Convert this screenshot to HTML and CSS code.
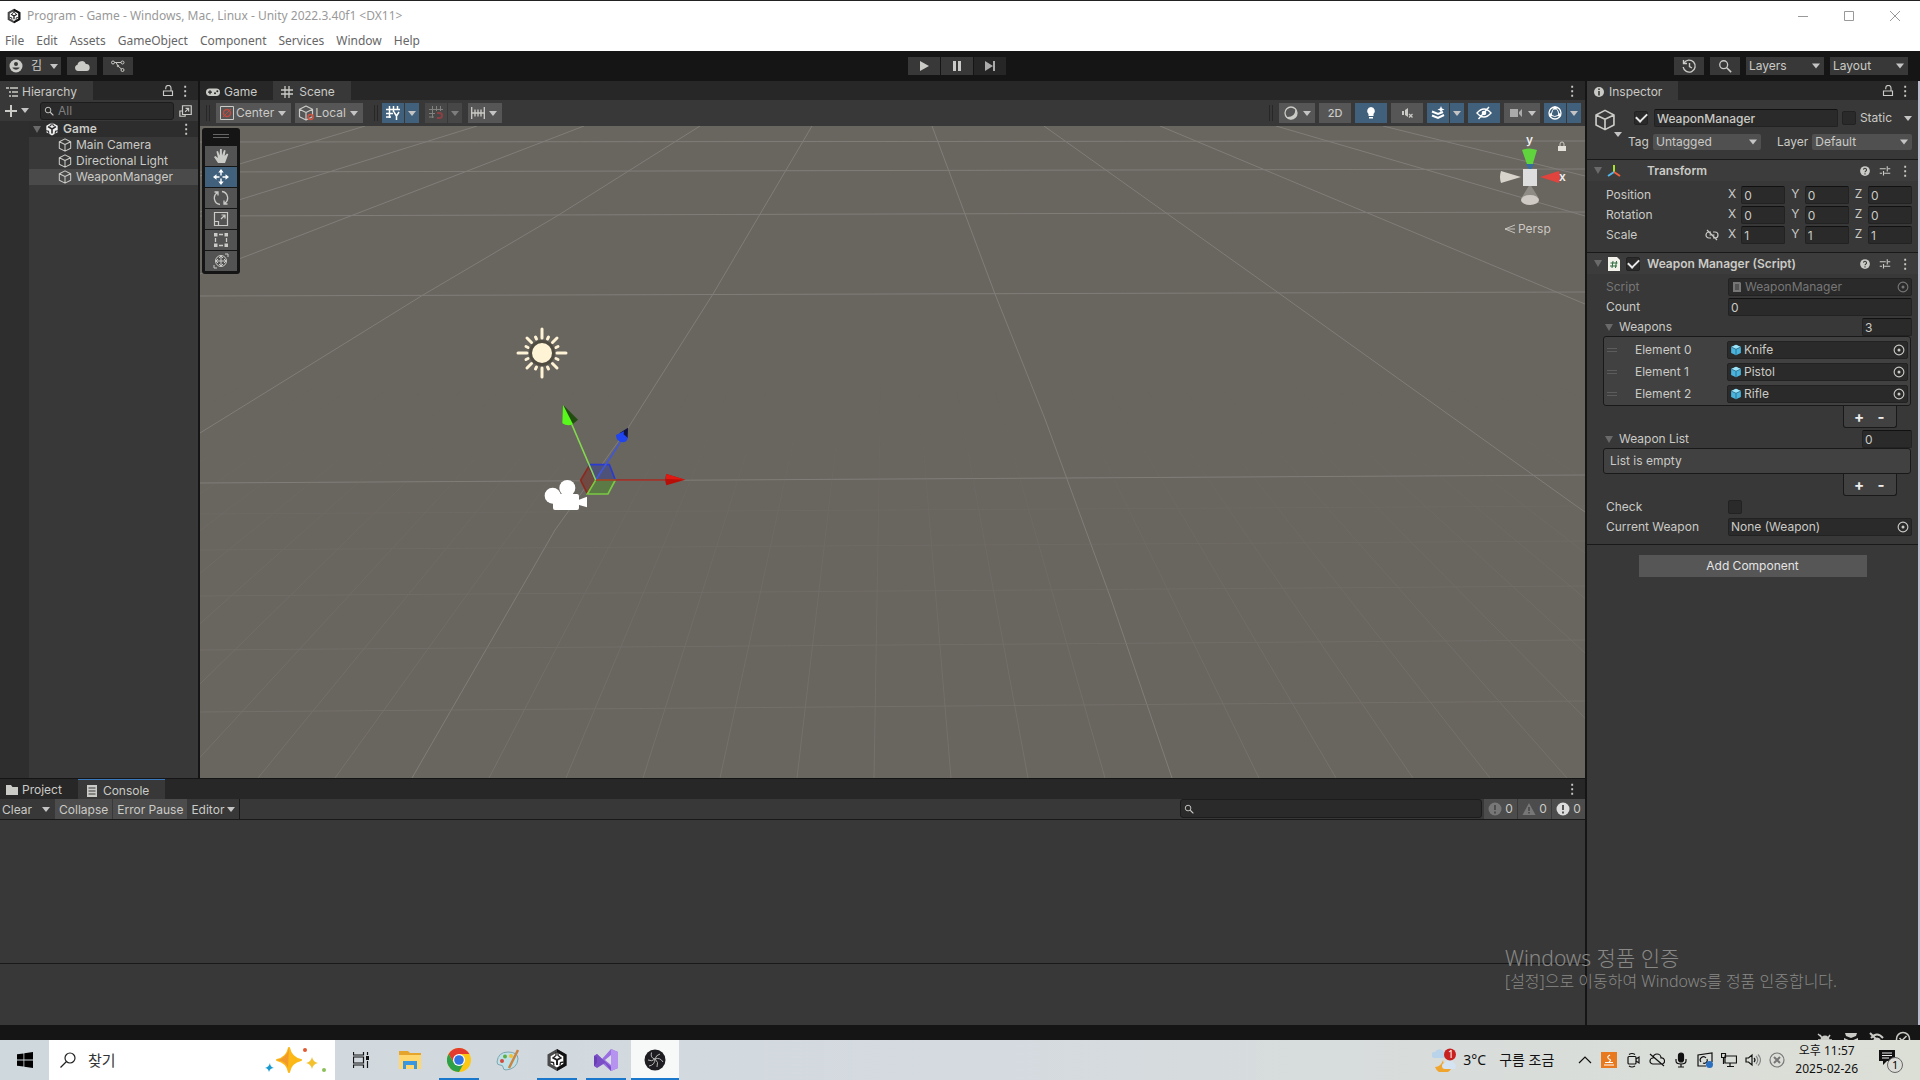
FILE: index.html
```html
<!DOCTYPE html>
<html lang="ko">

<head>
    <meta charset="UTF-8">
    <meta name="viewport" content="width=device-width, initial-scale=1">
    <title>Program - Game - Unity</title>
    <link rel="stylesheet" href="styles.css">
</head>

<body>

    <!-- ICONS -->
    <svg class="sprite" aria-hidden="true">
        <symbol id="i-cube" viewBox="0 0 16 16"><path d="M8 1 14.500 4.300V11.700L8 15 1.500 11.700V4.300ZM1.500 4.300 8 7.500 14.500 4.300M8 7.500V15" fill="none" stroke="currentColor" stroke-width="1.200" stroke-linejoin="round"/></symbol>
        <symbol id="i-dots" viewBox="0 0 16 16"><path d="M7 1h2.500v2.500H7zM7 7h2.500v2.500H7zM7 13h2.500v2.500H7z" fill="currentColor"/></symbol>
        <symbol id="i-lock" viewBox="0 0 16 16"><path d="M5 5.500V4a3.500 3.500 0 0 1 7 0v4M2 8h12v6H2z" fill="none" stroke="currentColor" stroke-width="1.500"/></symbol>
        <symbol id="i-search" viewBox="0 0 16 16"><circle cx="6.500" cy="6.500" r="4.500" fill="none" stroke="currentColor" stroke-width="1.500"/><path d="M10 10l5 5" stroke="currentColor" stroke-width="1.800"/></symbol>
        <symbol id="i-popout" viewBox="0 0 16 16"><path d="M4 2h10v10H4zM4 8H1v6h6v-2M7 9l4-4M7.500 5H11v3.500" fill="none" stroke="currentColor" stroke-width="1.400"/></symbol>
        <symbol id="i-help" viewBox="0 0 16 16"><circle cx="8" cy="8" r="6.500" fill="currentColor"/><path d="M6 6.200a2 2 0 1 1 2.800 2Q8 8.600 8 9.800M8 11v1.500" fill="none" stroke="#383838" stroke-width="1.500"/></symbol>
        <symbol id="i-preset" viewBox="0 0 16 16"><path d="M1 5h8M12 5h3M11 1.500v7M1 11h3M7 11h8M6 8v6" fill="none" stroke="currentColor" stroke-width="1.500"/></symbol>
        <symbol id="i-target" viewBox="0 0 16 16"><circle cx="8" cy="8" r="6.500" fill="none" stroke="currentColor" stroke-width="1.500"/><circle cx="8" cy="8" r="2" fill="currentColor"/></symbol>
        <symbol id="i-prefab" viewBox="0 0 16 16"><path d="M8 1 14.500 4v8L8 15 1.500 12V4z" fill="#4bb4dc"/><path d="M8 1 14.500 4 8 7 1.500 4z" fill="#9ee4f8"/><path d="M8 7v8M1.500 4 8 7l6.500-3" stroke="#206080" fill="none"/></symbol>
        <symbol id="i-unity" viewBox="0 0 16 16"><path d="M8 .5 14.500 4.200v7.600L8 15.500 1.500 11.800V4.200z" fill="#f0f0f0"/><path d="M8 8V13M8 8 3.500 5.300M8 8l4.500-2.700" fill="none" stroke="#2b2b2b" stroke-width="1.800"/><path d="M7 0v3.500L5 5M9 0v3.500L11 5M1 10l3 .5.500 3M15 10l-3 .5-.5 3" fill="none" stroke="#2b2b2b" stroke-width="1.200"/></symbol>
        <symbol id="i-unityapp" viewBox="0 0 24 24"><path d="M12 1 21.500 6.500v11L12 23 2.500 17.500v-11z" fill="#4a4a4a"/><path d="M12 1 21.500 6.500v11L12 23z" fill="#111"/><path d="M12 4.500 18.300 8.200v7.500L12 19.500 5.700 15.700V8.200z" fill="#fff"/><path d="M12 12v5M12 12 7.500 9.400M12 12l4.500-2.600" fill="none" stroke="#222" stroke-width="2"/><path d="M11 4v3.500L9 9M13 4v3.500L15 9M5.500 14l3 .5.500 3M18.500 14l-3 .5-.5 3" fill="none" stroke="#222" stroke-width="1.300"/></symbol>
    </svg>

    <header class="titlebar">
        <div class="caption">
            <svg class="icon-16"><use href="#i-unityapp"/></svg>
            <span class="caption-text">Program - Game - Windows, Mac, Linux - Unity 2022.3.40f1 &lt;DX11&gt;</span>
            <div class="win-buttons">
                <button aria-label="Minimize"><svg viewBox="0 0 12 12"><path d="M1 6.500h10"/></svg></button>
                <button aria-label="Maximize"><svg viewBox="0 0 12 12"><path d="M1.500 1.500h9v9h-9z"/></svg></button>
                <button aria-label="Close"><svg viewBox="0 0 12 12"><path d="M1 1l10 10M11 1 1 11"/></svg></button>
            </div>
        </div>
        <nav class="menu">
            <a href="#">File</a>
            <a href="#">Edit</a>
            <a href="#">Assets</a>
            <a href="#">GameObject</a>
            <a href="#">Component</a>
            <a href="#">Services</a>
            <a href="#">Window</a>
            <a href="#">Help</a>
        </nav>
    </header>

    <div class="app-toolbar">
        <div class="app-side">
            <button class="app-btn account">
                <svg class="icon-14" viewBox="0 0 14 14"><circle cx="7" cy="7" r="6.500" fill="currentColor"/><circle cx="7" cy="5" r="2" fill="#383838"/><path d="M3.500 9q3.500 3.500 7 0v-.5h-7z" fill="#383838"/></svg>
                김
                <i class="arrow"></i>
            </button>
            <button class="app-btn" aria-label="Cloud"><svg class="icon-16" viewBox="0 0 16 16"><path d="M4 13a3.200 3.200 0 0 1-.5-6.300A4.300 4.300 0 0 1 11.800 6 3.500 3.500 0 0 1 12.500 13z" fill="currentColor"/></svg></button>
            <button class="app-btn" aria-label="Version control"><svg class="icon-16" viewBox="0 0 16 16"><path d="M3.500 4.500h8M6 4.500l2 3.500 4 3.500" fill="none" stroke="currentColor"/><g fill="#383838" stroke="currentColor"><circle cx="3" cy="4.500" r="1.500"/><circle cx="12.500" cy="4.500" r="1.500"/><circle cx="12.500" cy="12" r="1.500"/><circle cx="8" cy="8" r=".8"/></g></svg></button>
        </div>
        <div class="play-controls">
            <button class="app-btn" aria-label="Play"><svg class="icon-14" viewBox="0 0 14 14"><path d="M3 2l9 5-9 5z" fill="currentColor"/></svg></button>
            <button class="app-btn" aria-label="Pause"><svg class="icon-14" viewBox="0 0 14 14"><path d="M3 2h3v10H3zM8 2h3v10H8z" fill="currentColor"/></svg></button>
            <button class="app-btn disabled" aria-label="Step"><svg class="icon-14" viewBox="0 0 14 14"><path d="M2 2l8 5-8 5zM10 2h2v10h-2z" fill="currentColor"/></svg></button>
        </div>
        <div class="app-side app-right">
            <button class="app-btn" aria-label="Undo history"><svg class="icon-16" viewBox="0 0 16 16"><path d="M3 5a6 6 0 1 1-.8 4M2.500 2v3.500H6M8.500 5v3.500l2.500 1.500" fill="none" stroke="currentColor" stroke-width="1.400"/></svg></button>
            <button class="app-btn" aria-label="Search"><svg class="icon-14"><use href="#i-search"/></svg></button>
            <span class="select app-select"><select aria-label="Layers"><option>Layers</option></select></span>
            <span class="select app-select"><select aria-label="Layout"><option>Layout</option></select></span>
        </div>
    </div>

    <main class="workspace">
        <div class="left-area">
            <div class="upper">

                <!-- HIERARCHY -->
                <section class="panel hierarchy">
                    <div class="tabs">
                        <div class="tab active">
                            <svg class="icon-12" viewBox="0 0 12 12"><path d="M0 2h3M4 2h8M3 6h2M6 6h6M3 10h2M6 10h6" stroke="currentColor" stroke-width="1.300"/></svg>
                            Hierarchy
                        </div>
                        <div class="tab-tools">
                            <svg class="icon-12"><use href="#i-lock"/></svg>
                            <svg class="icon-12"><use href="#i-dots"/></svg>
                        </div>
                    </div>
                    <div class="hier-toolbar">
                        <button class="plain" aria-label="Create"><svg class="icon-12" viewBox="0 0 12 12"><path d="M6 0v12M0 6h12" stroke="currentColor" stroke-width="2"/></svg><i class="arrow"></i></button>
                        <label class="search-box"><svg class="icon-10"><use href="#i-search"/></svg><input type="text" placeholder="All" aria-label="Search hierarchy"></label>
                        <button class="plain" aria-label="Open search"><svg class="icon-14"><use href="#i-popout"/></svg></button>
                    </div>
                    <ul class="tree">
                        <li class="scene-row"><i class="fold"></i><svg class="icon-14"><use href="#i-unity"/></svg>Game<svg class="icon-12 push"><use href="#i-dots"/></svg></li>
                        <li><svg class="icon-14"><use href="#i-cube"/></svg>Main Camera</li>
                        <li><svg class="icon-14"><use href="#i-cube"/></svg>Directional Light</li>
                        <li class="selected"><svg class="icon-14"><use href="#i-cube"/></svg>WeaponManager</li>
                    </ul>
                </section>

                <!-- SCENE -->
                <section class="panel scene">
                    <div class="tabs">
                        <div class="tab">
                            <svg class="icon-14" viewBox="0 0 14 14"><rect y="3.500" width="14" height="7.500" rx="3.700" fill="currentColor"/><path d="M2 7.200h4M4 5.200v4" stroke="#282828" stroke-width="1.300"/><circle cx="9" cy="8.300" r="1" fill="#282828"/><circle cx="11.300" cy="6.200" r="1" fill="#282828"/></svg>
                            Game
                        </div>
                        <div class="tab active wide">
                            <svg class="icon-12" viewBox="0 0 12 12"><path d="M4 0v12M8 0v12M0 4h12M0 8h12" stroke="currentColor" stroke-width="1.300"/></svg>
                            Scene
                        </div>
                        <div class="tab-tools"><svg class="icon-12"><use href="#i-dots"/></svg></div>
                    </div>
                    <div class="scene-toolbar">
                        <i class="grip"></i>
                        <button class="tb named"><svg class="icon-16" viewBox="0 0 16 16"><path d="M1.500 1.500h13v13h-13z" fill="none" stroke="currentColor"/><circle cx="8" cy="8" r="3.500" fill="none" stroke="#c2493d" stroke-width="1.500"/><path d="M4 12 12 4" stroke="#c2493d"/></svg>Center<i class="arrow"></i></button>
                        <button class="tb named"><svg class="icon-16" viewBox="0 0 16 16"><use href="#i-cube"/><circle cx="12.500" cy="12" r="2.500" fill="none" stroke="#d0503f" stroke-width="1.500"/></svg>Local<i class="arrow"></i></button>
                        <i class="grip second"></i>
                        <div class="tb-pair first">
                            <button class="tb on" aria-label="Grid"><svg class="icon-14" viewBox="0 0 14 14"><path d="M3.500 0v12M7.500 0v6M11.500 0v4M0 3.500h14M0 7.500h7M0 11h5M8 6l2.500 4L13 6M10.500 9.500V14" fill="none" stroke="currentColor" stroke-width="1.500"/></svg></button>
                            <button class="tb on" aria-label="Grid options"><i class="arrow"></i></button>
                        </div>
                        <div class="tb-pair dim">
                            <button class="tb" aria-label="Snap"><svg class="icon-14" viewBox="0 0 14 14"><path d="M3.500 0v12M7.500 0v5M11.500 0v5M0 3.500h14M0 7.500h6M0 11h5" fill="none" stroke="currentColor"/><path d="M8 7h2.500a2.500 2.500 0 0 1 0 5H8" fill="none" stroke="#e0484e" stroke-width="2"/></svg></button>
                            <button class="tb" aria-label="Snap options"><i class="arrow"></i></button>
                        </div>
                        <button class="tb" aria-label="Increment snapping"><svg class="icon-14" viewBox="0 0 14 14"><path d="M.7 1v12M13.300 1v12M4 3.500v7M7 3.500v7M10 3.500v7M0 7h14" stroke="currentColor" stroke-width="1.300"/></svg><i class="arrow"></i></button>

                        <div class="tb-right">
                            <i class="grip"></i>
                            <button class="tb view" aria-label="Shading"><svg class="icon-14" viewBox="0 0 14 14"><circle cx="7" cy="7" r="6" fill="none" stroke="currentColor" stroke-width="1.300"/><path d="M11.500 3a6 6 0 1 1-9.500 8q9 1 9.500-8z" fill="currentColor"/></svg><i class="arrow"></i></button>
                            <button class="tb sq">2D</button>
                            <button class="tb sq on" aria-label="Lighting"><svg class="icon-14" viewBox="0 0 14 14"><path d="M7 1a4 4 0 0 1 2.500 7v2h-5V8A4 4 0 0 1 7 1zM5 11h4v1.500H5z" fill="currentColor"/></svg></button>
                            <button class="tb sq" aria-label="Audio"><svg class="icon-14" viewBox="0 0 14 14"><path d="M2 5h2v4H2zM5 4l3-2v9L5 9z" fill="currentColor"/><path d="M9 8l3.500 3.500M12.500 8 9 11.500" stroke="currentColor" stroke-width="1.300"/></svg></button>
                            <div class="tb-pair">
                                <button class="tb on" aria-label="Effects"><svg class="icon-14" viewBox="0 0 14 14"><path d="M10 0l1 2.500L13.500 3.500 11 4.500 10 7 9 4.500 6.500 3.500 9 2.500z" fill="currentColor"/><path d="M1 5.500 7 8l5-2M1 9.500 7 12l6-3" fill="none" stroke="currentColor" stroke-width="2"/></svg></button>
                                <button class="tb on" aria-label="Effects options"><i class="arrow"></i></button>
                            </div>
                            <button class="tb sq on" aria-label="Hidden objects"><svg class="icon-16" viewBox="0 0 16 16"><path d="M1 8q7-8 14 0-7 8-14 0zM2.500 14 13 2" fill="none" stroke="currentColor" stroke-width="1.400"/><circle cx="8" cy="8" r="2.300" fill="currentColor"/></svg></button>
                            <button class="tb view dimicon" aria-label="Camera"><svg class="icon-14" viewBox="0 0 14 14"><path d="M1 3h8v8H1zM10 6l3-3v8l-3-3z" fill="currentColor"/></svg><i class="arrow"></i></button>
                            <div class="tb-pair">
                                <button class="tb on" aria-label="Gizmos"><svg class="icon-14" viewBox="0 0 14 14"><circle cx="7" cy="7" r="6" fill="none" stroke="currentColor" stroke-width="1.300"/><path d="M7 1Q4 4 3 9M7 1q4 4 4 8M2.500 9q4 3 9 0" fill="none" stroke="currentColor"/><circle cx="7" cy="2" r="1.700" fill="currentColor"/><circle cx="2.500" cy="9" r="1.700" fill="currentColor"/><circle cx="11.500" cy="9" r="1.700" fill="currentColor"/></svg></button>
                                <button class="tb on" aria-label="Gizmos options"><i class="arrow"></i></button>
                            </div>
                        </div>
                    </div>

                    <div class="viewport">
                        <svg class="world" viewBox="0 0 1385 652" preserveAspectRatio="xMinYMin slice" fill="none">
                            <defs>
                                <linearGradient id="fade" x1="0" y1="0" x2="0" y2="1">
                                    <stop offset=".4" stop-color="#000"/>
                                    <stop offset="1" stop-color="#fff"/>
                                </linearGradient>
                                <mask id="near" maskUnits="userSpaceOnUse" x="0" y="0" width="1385" height="652"><path d="M0 0h1385v652H0z" fill="url(#fade)"/></mask>
                            </defs>
                            <g stroke="#817d79" stroke-width="1">
                                <path d="M0 307 223 169 357 90 500 0M612 0 513 168 428 302 355 404 212 652M732 0 795 168 845 293 911 473 972 652M844 0 1080 168 1375 379 1385 386M960 0 1385 178M1076 0 1385 90M1183 0 1385 50M384 0 0 148M277 0 0 86M165 0 0 50"/>
                                <path d="M0 16 1385 15M0 46 1385 43M0 90 1385 86M0 170 1385 166"/>
                                <path d="M0 357 1385 349"/>
                            </g>
                            <!-- small grid cells, only close to the camera -->
                            <g stroke="#76726d" stroke-width="1" mask="url(#near)">
                                <path d="M687-115-1020 652M687-115-943 652M687-115-866 652M687-115-789 652M687-115-712 652M687-115-635 652M687-115-481 652M687-115-404 652M687-115-327 652M687-115-250 652M687-115-173 652M687-115-96 652M687-115-19 652M687-115 58 652M687-115 135 652M687-115 289 652M687-115 366 652M687-115 443 652M687-115 520 652M687-115 597 652M687-115 674 652M687-115 751 652M687-115 828 652M687-115 905 652M687-115 1059 652M687-115 1136 652M687-115 1213 652M687-115 1290 652M687-115 1367 652M687-115 1444 652M687-115 1521 652M687-115 1598 652M687-115 1675 652M687-115 1829 652M687-115 1906 652M687-115 1983 652M687-115 2060 652M687-115 2137 652M687-115 2214 652M687-115 2291 652"/>
                                <path d="M0 388 1385 380M0 424 1385 415M0 470 1385 460M0 524 1385 514M0 586 1385 575"/>
                            </g>
                            <!-- directional light -->
                            <g transform="translate(342 227)" stroke="#fff3d6" stroke-linecap="round">
                                <circle r="13" fill="#504c42" stroke="none"/>
                                <circle r="10" fill="#fff3d6" stroke="none"/>
                                <path d="M0-15V-24M0 15V24M-15 0H-24M15 0H24M10.500-10.500 15-15M10.500 10.500 15 15M-10.500-10.500-15-15M-10.500 10.500-15 15" stroke-width="3"/>
                                <path d="M5.500-14 6.500-16M14-5.500 16-6.500M14 5.500 16 6.500M5.500 14 6.500 16M-5.500 14-6.500 16M-14 5.500-16 6.500M-14-5.500-16-6.500M-5.500-14-6.500-16" stroke-width="3"/>
                            </g>
                            <!-- move handle and camera -->
                            <g transform="translate(300 174) scale(.3333)" stroke-width="5">
                                <path d="M287 540 262 580 242 541 266 500z" fill="#6f4a42" stroke="#8c281e"/>
                                <path d="M287 540 266 494H328L346 540z" fill="#4f5278" stroke="#2b3bd0"/>
                                <path d="M287 540H346L324 582H262z" fill="#5b7a45" stroke="#7ac943"/>
                                <path d="M287 540 362 425" stroke="#4057d8"/>
                                <path d="M287 540H500" stroke="#a5281e"/>
                                <path d="M287 540 215 372" stroke="#84d850"/>
                                <path d="M189 314 234 359 216 374z" fill="#234d10"/>
                                <path d="M189 314 187 370q14 10 32 3z" fill="#58f81c"/>
                                <path d="M384 383 383 415 358 400z" fill="#101442"/>
                                <path d="M372 394 348 405q0 22 22 22 12-2 13-14l-12-10z" fill="#2044ee"/>
                                <path d="M556 539 499 522q-6 17 0 34z" fill="#b80e08"/>
                                <path d="M556 539 499 522q-2 8-1 15z" fill="#de1a12"/>
                                <g fill="#fff"><circle cx="158" cy="587" r="24"/><circle cx="202" cy="564" r="24"/><rect x="159" y="582" width="78" height="48" rx="6"/><path d="M235 600l26-10v32l-26-8z"/></g>
                            </g>
                        </svg>

                        <div class="tools">
                            <i class="tools-grip"></i>
                            <button class="tool" aria-label="Hand"><svg viewBox="0 0 16 16"><path d="M5 15 1 9l1.400-1L5 10 3.400 3.500l1.600-.4L6.600 7.500 7 1h1.800L9 7.500 11 2l1.600.4-1 5.600L14 5.500l1.300.8L12 15z" fill="currentColor"/></svg></button>
                            <button class="tool on" aria-label="Move"><svg viewBox="0 0 16 16"><path d="M8 0l2.700 3.500H5.300zM8 16l2.700-3.500H5.300zM0 8l3.500-2.700v5.400zM16 8l-3.500-2.700v5.400z" fill="currentColor"/><path d="M8 3v3.500M8 9.500V13M3 8h3.500M9.500 8H13" stroke="currentColor" stroke-width="1.400"/></svg></button>
                            <button class="tool" aria-label="Rotate"><svg viewBox="0 0 16 16"><path d="M7 14.500A6.500 6.500 0 0 1 4.500 2.500M1.500 2h3.500v3.500M9 1.500a6.500 6.500 0 0 1 2.500 12M14.500 14H11v-3.500" fill="none" stroke="currentColor" stroke-width="1.300"/></svg></button>
                            <button class="tool" aria-label="Scale"><svg viewBox="0 0 16 16"><path d="M1.500 1.500h13v13h-13zM1.500 10.500h4v4M8 8l4-4M8.500 4H12v3.500" fill="none" stroke="currentColor" stroke-width="1.200"/></svg></button>
                            <button class="tool" aria-label="Rect"><svg viewBox="0 0 16 16"><path d="M2.500 6v4M13.500 6v4M6 2.500h4M6 13.500h4" stroke="currentColor" stroke-width="1.300"/><path d="M1 1h3.500v3.500H1zM11.500 1H15v3.500h-3.500zM1 11.500h3.500V15H1zM11.500 11.500H15V15h-3.500z" fill="currentColor"/></svg></button>
                            <button class="tool" aria-label="Transform"><svg viewBox="0 0 16 16"><circle cx="8" cy="8" r="5.500" fill="none" stroke="currentColor"/><path d="M8 3v10M3 8h10M6 5l2-2 2 2M6 11l2 2 2-2M5 6 3 8l2 2M11 6l2 2-2 2M12 1h3v3M1 12v3h3" fill="none" stroke="currentColor"/></svg></button>
                        </div>

                        <svg class="axes" viewBox="0 0 74 104">
                            <path d="M25 17q7-3 15 0L34 37h-2z" fill="#5fd43c"/>
                            <path d="M29 31 33 39 37 31z" fill="#3b6b9a"/>
                            <path d="M24 44 4 38q-2 6 0 12z" fill="#d8d4cc"/>
                            <path d="M43 44 62 38q2 6 0 12z" fill="#e0443c"/>
                            <path d="M33 51 41 64H25z" fill="#8f8c86"/>
                            <ellipse cx="33" cy="67" rx="9" ry="5" fill="#cfcbc4"/>
                            <path d="M26 36h14v17H26z" fill="#dedede"/>
                            <path d="M61 13h8v5h-8z" fill="#e4e0da"/>
                            <path d="M63 13v-2a2 2 0 0 1 4 0v2" fill="none" stroke="#cfcbc4"/>
                            <path d="M18 92 8 96 18 100M8 96h10" fill="none" stroke="#c8c5be"/>
                            <text x="29" y="11" class="axis">y</text>
                            <text x="62" y="48" class="axis">x</text>
                            <text x="21" y="100">Persp</text>
                        </svg>
                    </div>
                </section>
            </div>

            <!-- CONSOLE -->
            <section class="panel console">
                <div class="tabs">
                    <div class="tab">
                        <svg class="icon-12" viewBox="0 0 12 12"><path d="M0 1h5l1.500 2H12v8H0z" fill="currentColor"/></svg>
                        Project
                    </div>
                    <div class="tab active focused">
                        <svg class="icon-12" viewBox="0 0 12 12"><path d="M1 0h10v12H1z" fill="currentColor"/><path d="M2.500 3h7M2.500 6h7M2.500 9h7" stroke="#383838"/></svg>
                        Console
                    </div>
                    <div class="tab-tools"><svg class="icon-12"><use href="#i-dots"/></svg></div>
                </div>
                <div class="console-toolbar">
                    <button class="cb clear">Clear<i class="arrow"></i></button>
                    <button class="cb lit">Collapse</button>
                    <button class="cb lit">Error Pause</button>
                    <button class="cb editor">Editor<i class="arrow"></i></button>
                    <label class="search-box console-search"><svg class="icon-10"><use href="#i-search"/></svg><input type="text" aria-label="Search console"></label>
                    <button class="cb lit count off"><svg class="icon-14" viewBox="0 0 14 14"><circle cx="7" cy="7" r="6.500" fill="currentColor"/><path d="M7 3v5M7 9.500v2" stroke="#444" stroke-width="1.600"/></svg>0</button>
                    <button class="cb lit count off"><svg class="icon-14" viewBox="0 0 14 14"><path d="M7 1l6.500 12H.5z" fill="currentColor"/><path d="M7 5v4M7 10v1.500" stroke="#444" stroke-width="1.500"/></svg>0</button>
                    <button class="cb lit count"><svg class="icon-14" viewBox="0 0 14 14"><circle cx="7" cy="7" r="6.500" fill="#ddd"/><path d="M7 3v5M7 9.500v2" stroke="#333" stroke-width="1.600"/></svg>0</button>
                </div>
                <div class="log-list"></div>
                <div class="log-detail"></div>
            </section>
        </div>

        <!-- INSPECTOR -->
        <section class="panel inspector">
            <div class="tabs">
                <div class="tab active">
                    <svg class="icon-12" viewBox="0 0 12 12"><circle cx="6" cy="6" r="5" fill="currentColor"/><path d="M6 2.500V4M6 5v4.500" stroke="#383838" stroke-width="1.600"/></svg>
                    Inspector
                </div>
                <div class="tab-tools">
                    <svg class="icon-12"><use href="#i-lock"/></svg>
                    <svg class="icon-12"><use href="#i-dots"/></svg>
                </div>
            </div>

            <div class="object-head">
                <div class="object-icon"><svg><use href="#i-cube"/></svg><i class="arrow"></i></div>
                <div class="object-fields">
                    <div class="name-row">
                        <input type="checkbox" class="check" checked aria-label="Active">
                        <input type="text" class="field name" value="WeaponManager" aria-label="Name">
                        <input type="checkbox" class="check" id="static">
                        <label for="static">Static</label>
                        <i class="arrow"></i>
                    </div>
                    <div class="tag-row">
                        <label for="tag">Tag</label>
                        <span class="select tag-select"><select id="tag"><option>Untagged</option></select></span>
                        <label for="layer">Layer</label>
                        <span class="select layer-select"><select id="layer"><option>Default</option></select></span>
                    </div>
                </div>
            </div>

            <div class="component">
                <div class="comp-head">
                    <i class="fold"></i>
                    <svg class="icon-14" viewBox="0 0 14 14"><path d="M7 8V1" stroke="#a6e22e" stroke-width="2"/><path d="M7 8 1 12" stroke="#4fb8f0" stroke-width="2"/><path d="M7 8l6 4" stroke="#f0623c" stroke-width="2"/></svg>
                    <span class="no-check"></span>
                    <h2>Transform</h2>
                    <svg class="icon-12"><use href="#i-help"/></svg>
                    <svg class="icon-12"><use href="#i-preset"/></svg>
                    <svg class="icon-12"><use href="#i-dots"/></svg>
                </div>
                <div class="props">
                    <div class="prop">
                        <span class="prop-name">Position</span>
                        <label class="axis-field">X<input type="text" class="field" value="0"></label>
                        <label class="axis-field">Y<input type="text" class="field" value="0"></label>
                        <label class="axis-field">Z<input type="text" class="field" value="0"></label>
                    </div>
                    <div class="prop">
                        <span class="prop-name">Rotation</span>
                        <label class="axis-field">X<input type="text" class="field" value="0"></label>
                        <label class="axis-field">Y<input type="text" class="field" value="0"></label>
                        <label class="axis-field">Z<input type="text" class="field" value="0"></label>
                    </div>
                    <div class="prop">
                        <span class="prop-name">Scale<svg class="icon-14" viewBox="0 0 14 14"><path d="M6 10H4a3 3 0 0 1 0-6h2M8 4h2a3 3 0 0 1 0 6H8M4.500 7h5M2 2l10 10" fill="none" stroke="currentColor" stroke-width="1.200"/></svg></span>
                        <label class="axis-field">X<input type="text" class="field" value="1"></label>
                        <label class="axis-field">Y<input type="text" class="field" value="1"></label>
                        <label class="axis-field">Z<input type="text" class="field" value="1"></label>
                    </div>
                </div>
            </div>

            <div class="component script">
                <div class="comp-head">
                    <i class="fold"></i>
                    <svg class="icon-14" viewBox="0 0 14 14"><path d="M1 0h9l3 3v11H1z" fill="#f2f2ea"/><path d="M6 4 5 11M9.500 4l-1 7M3.500 6h7M3 9h7" stroke="#2c6b3c"/></svg>
                    <input type="checkbox" class="check" checked aria-label="Enabled">
                    <h2>Weapon Manager (Script)</h2>
                    <svg class="icon-12"><use href="#i-help"/></svg>
                    <svg class="icon-12"><use href="#i-preset"/></svg>
                    <svg class="icon-12"><use href="#i-dots"/></svg>
                </div>
                <div class="props">
                    <div class="prop disabled">
                        <span class="prop-name">Script</span>
                        <button class="object-field" disabled><svg class="icon-12" viewBox="0 0 12 12"><path d="M2 1h7l1 1v9H2z" fill="currentColor"/><path d="M4 4h4M4 6h4M4 8h4" stroke="#333"/></svg>WeaponManager<svg class="icon-12 push"><use href="#i-target"/></svg></button>
                    </div>
                    <div class="prop">
                        <label class="prop-name" for="count">Count</label>
                        <input type="text" class="field" id="count" value="0">
                    </div>
                    <div class="prop list-head">
                        <i class="fold"></i>
                        <label for="weapons">Weapons</label>
                        <input type="text" class="field size" id="weapons" value="3">
                    </div>
                    <div class="list">
                        <div class="element"><i class="handle"></i><span>Element 0</span><button class="object-field"><svg class="icon-12"><use href="#i-prefab"/></svg>Knife<svg class="icon-12 push"><use href="#i-target"/></svg></button></div>
                        <div class="element"><i class="handle"></i><span>Element 1</span><button class="object-field"><svg class="icon-12"><use href="#i-prefab"/></svg>Pistol<svg class="icon-12 push"><use href="#i-target"/></svg></button></div>
                        <div class="element"><i class="handle"></i><span>Element 2</span><button class="object-field"><svg class="icon-12"><use href="#i-prefab"/></svg>Rifle<svg class="icon-12 push"><use href="#i-target"/></svg></button></div>
                    </div>
                    <div class="list-foot"><button>+</button><button>-</button></div>
                    <div class="prop list-head">
                        <i class="fold"></i>
                        <label for="weapon-list">Weapon List</label>
                        <input type="text" class="field size" id="weapon-list" value="0">
                    </div>
                    <div class="list empty">List is empty</div>
                    <div class="list-foot"><button>+</button><button>-</button></div>
                    <div class="prop">
                        <label class="prop-name" for="check">Check</label>
                        <input type="checkbox" class="check" id="check">
                    </div>
                    <div class="prop">
                        <span class="prop-name">Current Weapon</span>
                        <button class="object-field">None (Weapon)<svg class="icon-12 push"><use href="#i-target"/></svg></button>
                    </div>
                </div>
            </div>

            <button class="add-component">Add Component</button>
        </section>
    </main>

    <div class="statusbar">
        <svg viewBox="0 0 16 16"><circle cx="8" cy="9" r="4.500" fill="currentColor"/><path d="M1 3l14 12M3 4l2 3M13 4l-2 3M1 9h3M12 9h3" stroke="currentColor" stroke-width="1.500"/></svg>
        <svg viewBox="0 0 16 16"><path d="M2 2h12l-1 3-5 2-5-2zM1 7l7 3 7-3v7H1z" fill="currentColor"/></svg>
        <svg viewBox="0 0 16 16"><path d="M2 7q6-7 12 0M5 9q3-3 6 0M1 2l13 13M4 12h8" fill="none" stroke="currentColor" stroke-width="2"/></svg>
        <svg viewBox="0 0 16 16"><circle cx="8" cy="8" r="6.500" fill="none" stroke="currentColor" stroke-width="1.500"/><path d="M4.500 7 7 9.500 11.500 5" fill="none" stroke="currentColor" stroke-width="1.500"/></svg>
    </div>

    <div class="watermark">
        <p class="big">Windows 정품 인증</p>
        <p>[설정]으로 이동하여 Windows를 정품 인증합니다.</p>
    </div>

    <!-- TASKBAR -->
    <footer class="taskbar">
        <button class="start" aria-label="Start"><svg viewBox="0 0 16 16"><path d="M0 2.300 6.500 1.400V7.600H0zM7.300 1.300 16 0V7.600H7.300zM0 8.400h6.500v6.200L0 13.700zM7.300 8.400H16V16L7.300 14.700z"/></svg></button>
        <label class="win-search">
            <svg class="icon-16" viewBox="0 0 16 16"><circle cx="10" cy="6" r="5" fill="none" stroke="#222" stroke-width="1.200"/><path d="M6.500 9.500.5 15.500" stroke="#222" stroke-width="1.300"/></svg>
            <input type="text" placeholder="찾기" aria-label="찾기">
            <svg class="sparkle" viewBox="0 0 62 26"><path d="M24 1Q26 11 36 13 26 15 24 25 22 15 12 13 22 11 24 1z" fill="#fbb816" stroke="#fbb816" stroke-width="2" stroke-linejoin="round"/><path d="M24 1Q22 11 12 13q9 1 11 8z" fill="#f39a2d"/><path d="M47 10q1 5 6 6-5 1-6 6-1-5-6-6 5-1 6-6z" fill="#f3c02e"/><path d="M5 16q0 4 4 5-4 0-5 4-1-4-4-4 4-1 5-5z" fill="#1a9bd0"/><circle cx="40" cy="3" r="2" fill="#e05a33"/><circle cx="59" cy="23" r="2" fill="#8cc05a"/></svg>
        </label>
        <div class="apps">
            <button aria-label="Task view"><svg class="small" viewBox="0 0 16 16"><path d="M.5 0v3h10V0M.5 16v-3h10v3M.5 5h10v6H.5zM14.500 0v3M14.500 9v7" fill="none" stroke="#111" stroke-width="1.200"/><path d="M13 4h3v4h-3z" fill="#111"/></svg></button>
            <button aria-label="File Explorer"><svg viewBox="0 0 24 24"><path d="M1 3h9l2 2h11v16H1z" fill="#e5a52c"/><path d="M1 7h22v14H1z" fill="#ffd76e"/><path d="M5 13h14v8h-3v-4H8v4H5z" fill="#3a96dd"/></svg></button>
            <button class="running" aria-label="Chrome"><svg viewBox="0 0 24 24"><circle cx="12" cy="12" r="12" fill="#fdc813"/><path d="M12 6h10.400A12 12 0 0 0 1.600 6L7 15z" fill="#e33b2e"/><path d="M1.600 6A12 12 0 0 0 12 24l5-9-10 0z" fill="#2da04a"/><circle cx="12" cy="12" r="6" fill="#fff"/><circle cx="12" cy="12" r="4.800" fill="#2f74e0"/></svg></button>
            <button aria-label="Paint"><svg viewBox="0 0 24 24"><path d="M1 14Q2 4 12 4q10 0 10 7-1 10-12 11-3 0-3-3 0-2-3-2-3 0-3-3z" fill="#bfe0e6" stroke="#7fa6b0"/><circle cx="6" cy="13" r="2" fill="#d24b3c"/><circle cx="9" cy="8.500" r="2" fill="#5bb045"/><circle cx="15" cy="8" r="2" fill="#f0c030"/><path d="M22 2 13 20" stroke="#c98544" stroke-width="2.500"/></svg></button>
            <button class="running" aria-label="Unity"><svg><use href="#i-unityapp"/></svg></button>
            <button class="running" aria-label="Visual Studio"><svg viewBox="0 0 24 24"><path d="M17 1l7 3v16l-7 3L0 8l3-2 5 5z" fill="#9a6fe0"/><path d="M0 8l3-2 14 13v4L11 15l-8 5-3-2z" fill="#7a4fc5"/><path d="M0 8v10l3-3V9z" fill="#6a3fb5"/><path d="M17 7v10l-6-5z" fill="#d9dde6"/><path d="M17 1l7 3v16l-7 3z" fill="#b593ee"/></svg></button>
            <button class="running current" aria-label="OBS Studio"><svg viewBox="0 0 24 24"><circle cx="12" cy="12" r="10.500" fill="#1e1e22"/><path d="M12 11Q7 10 8.500 4.500M12 11q5-2 8 3M12 11q0 6-6 7M12 11q-3 3-7 1M12 11q1-4 5-5M12 11q4 3 2 8" fill="none" stroke="#b5b5b5" stroke-width="1"/></svg></button>
        </div>
        <div class="tray">
            <button class="weather">
                <svg viewBox="0 0 26 24"><path d="M3 19a9 9 0 0 0 17 0q-9 0-9-7-2 7-8 7z" fill="#f0a52e"/><path d="M2 10a3 3 0 0 1 1-6 5 5 0 0 1 9 0q4 1 3 6z" fill="#b9d3ea"/><path d="M13 21a3 3 0 0 1 0-6 5 5 0 0 1 9 0q3 2 1 6z" fill="#d5e4f2"/><circle cx="18" cy="6.500" r="6" fill="#c8201e"/><text x="16" y="10">1</text></svg>
                <span>3°C</span><span class="sky">구름 조금</span>
            </button>
            <div class="tray-icons">
                <svg viewBox="0 0 16 16"><path d="M2 11 8 5l6 6"/></svg>
                <svg viewBox="0 0 16 16"><path d="M0 0h16v16H0z" fill="#e8791e" stroke="none"/><path d="M3 13h10M4 10.500h8M9 3q-4 2-1 4 3 1 0 3" stroke="#fff"/></svg>
                <svg viewBox="0 0 16 16"><rect x="3" y="4.500" width="8" height="7.500" rx="1"/><path d="M11 7l3-2v6l-3-2M4 2.500q3-2 6 0M4 14q3 2 6 0"/></svg>
                <svg viewBox="0 0 16 16"><path d="M4 12a3 3 0 0 1 0-6 4 4 0 0 1 8 0 3 3 0 0 1 1 6zM1 2l14 12"/></svg>
                <svg viewBox="0 0 16 16"><rect x="5.500" y="1" width="5" height="9" rx="2.500" fill="#111"/><path d="M3 7v2q0 3 5 3t5-3V7M8 12v3M5 15h6"/></svg>
                <svg viewBox="0 0 16 16"><path d="M9 14H1V3l14-2v9M4 10a3 3 0 0 1 5-4M10 7a3 3 0 0 1-4 4"/><circle cx="12.500" cy="12.500" r="3.500" fill="#2a6fc0" stroke="none"/></svg>
                <svg viewBox="0 0 16 16"><path d="M4 4h11.500v7H4zM9 11v3M6 14.500h7M.5 1.500h4v4h-4zM2.500 6v6"/></svg>
                <svg viewBox="0 0 16 16"><path d="M1 6v4h2.500L7 13V3L3.500 6zM9 6q2 2 0 4"/><path d="M11 4q3.500 4 0 8M13 2.500q5 5.500 0 11" stroke="#888"/></svg>
                <svg viewBox="0 0 16 16"><circle cx="8" cy="8" r="7" stroke="#777"/><path d="M5 5l6 6M11 5l-6 6" stroke="#777" stroke-width="2"/></svg>
            </div>
            <button class="clock"><span>오후 11:57</span><span>2025-02-26</span></button>
            <button class="notify" aria-label="Notifications"><svg viewBox="0 0 26 26"><path d="M1 3h16v11h-8l-4 4v-4H1z" fill="#111"/><path d="M4 6h10M4 8.500h10M4 11h7" stroke="#eee" stroke-width="1.200"/><circle cx="17" cy="18" r="7.500" fill="#dcdcd8" stroke="#666"/><text x="14" y="22">1</text></svg></button>
        </div>
    </footer>

</body>

</html>
```

FILE: styles.css
```css
:root {
    --panel: #383838;
    --dark: #272727;
    --field: #2a2a2a;
    --button: #565656;
    --blue: #41607c;
    --line: #191919;
    --text: #cacac6;
}

* {
    box-sizing: border-box;
}

body {
    background-color: #151515;
    color: var(--text);
    display: flex;
    flex-direction: column;
    font-family: Inter, "Noto Sans CJK KR", sans-serif;
    font-size: 12px;
    height: 100vh;
    line-height: 16px;
    margin: 0;
    overflow: hidden;
    position: relative;
}

button,
input,
select {
    background: none;
    border: 0;
    color: inherit;
    font: inherit;
    margin: 0;
    padding: 0;
}

button {
    align-items: center;
    display: flex;
    justify-content: center;
}

input,
select {
    min-width: 0;
}

svg {
    display: block;
    flex-shrink: 0;
}

.sprite {
    display: none;
}

.icon-10 {
    height: 10px;
    width: 10px;
}

.icon-12 {
    height: 12px;
    width: 12px;
}

.icon-14 {
    height: 14px;
    width: 14px;
}

.icon-16 {
    height: 16px;
    width: 16px;
}

.push {
    margin-left: auto;
}

.arrow,
.select::after {
    border: 4px solid transparent;
    border-bottom: 0;
    border-top: 5px solid #c4c4c4;
    flex-shrink: 0;
    height: 0;
    width: 0;
}

.fold {
    border: 4px solid transparent;
    border-bottom: 0;
    border-top: 7px solid #6a6a6a;
    flex-shrink: 0;
    height: 0;
    width: 0;
}

/* ====== TITLE BAR ====== */

.titlebar {
    background-color: #fff;
    border-top: 1px solid #222;
    color: #999;
    font-family: "Noto Sans", "Noto Sans CJK KR", sans-serif;
    height: 51px;
}

.caption {
    align-items: center;
    display: flex;
    gap: 5px;
    height: 29px;
    padding: 0 2px 0 6px;
}

.win-buttons {
    display: flex;
    margin-left: auto;
}

.win-buttons button {
    height: 28px;
    width: 46px;
}

.win-buttons svg {
    fill: none;
    height: 12px;
    stroke: #999;
    width: 12px;
}

.menu {
    display: flex;
    gap: 12px;
    padding: 3px 5px;
}

.menu a {
    color: #666;
    text-decoration: none;
}

/* ====== TOP TOOLBAR ====== */

.app-toolbar {
    align-items: center;
    display: flex;
    height: 30px;
    padding: 0 12px 0 6px;
}

.app-side,
.play-controls {
    display: flex;
    flex: 1;
    gap: 6px;
}

.play-controls {
    flex: none;
    gap: 1px;
}

.app-right {
    justify-content: flex-end;
}

.app-btn {
    background-color: var(--panel);
    height: 18px;
    width: 30px;
}

.play-controls .app-btn {
    width: 32px;
}

.account {
    gap: 8px;
    width: 55px;
}

.disabled.app-btn {
    background-color: #262626;
    color: #aaa;
}

.select {
    display: flex;
    position: relative;
}

.select::after {
    content: "";
    pointer-events: none;
    position: absolute;
    right: 4px;
    top: 50%;
    transform: translateY(-50%);
}

select {
    appearance: none;
    width: 100%;
}

.app-select {
    background-color: var(--panel);
    height: 18px;
    padding-left: 3px;
    width: 78px;
}

/* ====== PANELS ====== */

.workspace {
    border-right: 2px solid #b9b9cc;
    display: flex;
    flex: 1;
    gap: 2px;
    min-height: 0;
}

.left-area {
    display: flex;
    flex: 1;
    flex-direction: column;
    gap: 1px;
    min-width: 0;
}

.upper {
    display: flex;
    flex: 1;
    gap: 2px;
    min-height: 0;
}

.panel {
    background-color: var(--panel);
    display: flex;
    flex-direction: column;
}

.tabs {
    background-color: var(--dark);
    display: flex;
    height: 19px;
}

.tab {
    align-items: center;
    display: flex;
    gap: 4px;
    padding: 2px 16px 0 6px;
}

.tab.active {
    background-color: var(--panel);
}

.tab.wide {
    gap: 6px;
    padding-left: 8px;
}

.tab.focused {
    border-top: 1px solid #3a79bb;
    gap: 5px;
    padding-left: 8px;
}

.tab-tools {
    align-items: center;
    display: flex;
    gap: 5px;
    margin-left: auto;
    padding-right: 7px;
}

.search-box {
    align-items: center;
    background-color: var(--field);
    border: 1px solid #1c1c1c;
    border-radius: 3px;
    display: flex;
    flex: 1;
    gap: 4px;
    height: 18px;
    min-width: 0;
    padding: 0 3px;
}

.search-box input {
    flex: 1;
}

.search-box input::placeholder {
    color: #808080;
}

/* ====== HIERARCHY ====== */

.hierarchy {
    width: 198px;
}

.hier-toolbar {
    align-items: center;
    display: flex;
    gap: 5px;
    height: 21px;
    padding: 0 5px;
}

.plain {
    gap: 4px;
}

.hier-toolbar .search-box {
    margin-left: 6px;
}

.tree {
    border-left: 29px solid #2e2e2e;
    flex: 1;
    list-style-type: none;
    margin: 0;
    padding: 0;
}

.tree li {
    align-items: center;
    display: flex;
    gap: 4px;
    height: 16px;
    padding-left: 29px;
}

.tree .scene-row {
    background-color: #2d2d2d;
    font-weight: 600;
    padding: 0 6px 0 4px;
}

.tree .selected {
    background-color: #4a4a4a;
}

/* ====== SCENE ====== */

.scene {
    flex: 1;
    min-width: 0;
}

.scene-toolbar {
    align-items: center;
    display: flex;
    gap: 4px;
    height: 26px;
    padding: 0 4px 0 6px;
}

.grip {
    border: 1px solid #272727;
    border-width: 0 1px;
    height: 16px;
    margin-right: 2px;
    width: 4px;
}

.grip.second {
    margin-left: 7px;
    margin-right: 0;
}

.tb {
    background-color: var(--button);
    gap: 4px;
    height: 20px;
    padding: 0 5px 0 3px;
}

.tb.named svg {
    margin-right: -3px;
}

.tb.on {
    background-color: var(--blue);
    color: #fff;
}

.tb.sq {
    font-size: 11px;
    font-weight: 500;
    padding: 0;
    width: 32px;
}

.tb.view {
    gap: 5px;
    padding: 0;
    width: 36px;
}

.tb-pair {
    display: flex;
    gap: 1px;
}

.tb-pair .tb {
    padding: 0 4px;
}

.tb-pair .tb + .tb {
    padding: 0 3px;
}

.dim {
    margin: 0 2px;
    opacity: .5;
}

.dimicon {
    color: #aaa;
}

.tb-right {
    align-items: center;
    display: flex;
    gap: 4px;
    margin-left: auto;
}

.viewport {
    background-color: #69655f;
    flex: 1;
    min-height: 0;
    position: relative;
}

.world {
    height: 100%;
    width: 100%;
}

.tools {
    background-color: #151515;
    border-radius: 3px;
    display: flex;
    flex-direction: column;
    gap: 1px;
    left: 2px;
    padding: 3px;
    position: absolute;
    top: 2px;
    width: 38px;
}

.tools-grip {
    align-self: center;
    border: 1px solid #666;
    border-width: 1px 0;
    height: 4px;
    margin: 3px 0 7px;
    width: 16px;
}

.tool {
    background-color: #535353;
    height: 20px;
}

.tool.on {
    background-color: var(--blue);
    color: #fff;
}

.tool svg {
    height: 16px;
    width: 16px;
}

.axes {
    height: 104px;
    position: absolute;
    right: 14px;
    top: 7px;
    width: 74px;
}

.axes text {
    fill: #ccc8c2;
    font-size: 12px;
}

.axes .axis {
    fill: #eee;
    font-weight: 600;
}

/* ====== CONSOLE ====== */

.console {
    height: 246px;
}

.console .tabs {
    height: 20px;
}

.console-toolbar {
    border-bottom: 1px solid var(--line);
    display: flex;
    gap: 1px;
    height: 21px;
}

.cb {
    height: 20px;
    padding: 1px 4px 0;
}

.cb.lit {
    background-color: #4c4c4c;
}

.cb.clear {
    gap: 10px;
    padding-left: 2px;
}

.editor {
    border-right: 1px solid var(--line);
    gap: 3px;
    padding-left: 3px;
}

.console-search {
    flex: none;
    height: 19px;
    margin-left: auto;
    margin-right: 1px;
    width: 302px;
}

.cb.count {
    gap: 3px;
    padding: 0;
    width: 33px;
}

.off svg {
    color: #777;
}

.log-list {
    border-bottom: 1px solid var(--line);
    flex: 1;
}

.log-detail {
    height: 61px;
}

/* ====== INSPECTOR ====== */

.inspector {
    width: 331px;
}

.object-head {
    display: flex;
    gap: 8px;
    height: 59px;
    padding: 9px 6px 0 7px;
}

.object-icon {
    display: flex;
    height: 28px;
    width: 26px;
}

.object-icon svg {
    height: 22px;
    width: 22px;
}

.object-icon .arrow {
    align-self: flex-end;
    margin-left: -2px;
}

.object-fields {
    flex: 1;
    min-width: 0;
}

.name-row,
.tag-row {
    align-items: center;
    display: flex;
    gap: 4px;
    height: 18px;
}

.name-row {
    margin-bottom: 6px;
    padding-left: 6px;
}

.name-row .arrow {
    margin-left: auto;
}

.field {
    background-color: var(--field);
    border: 1px solid #222;
    border-radius: 2px;
    border-top-color: #111;
    flex: 1;
    height: 18px;
    padding: 0 2px;
}

.name {
    font-weight: 500;
    margin-left: 2px;
}

.name-row label {
    margin-right: 8px;
}

.check {
    appearance: none;
    background-color: var(--field);
    border: 1px solid #222;
    border-radius: 2px;
    display: grid;
    height: 14px;
    place-items: center;
    width: 14px;
}

.check:checked::before {
    border: solid #e8e8e8;
    border-width: 0 0 2px 2px;
    content: "";
    height: 5px;
    margin-bottom: 3px;
    transform: rotate(-45deg);
    width: 9px;
}

.tag-row .select {
    background-color: #505050;
    border-radius: 2px;
    height: 16px;
    padding-left: 3px;
}

.tag-select {
    margin-right: 12px;
    width: 108px;
}

.layer-select {
    flex: 1;
}

.component {
    border-top: 1px solid var(--line);
}

.component .props {
    display: flex;
    flex-direction: column;
    gap: 2px;
    padding: 5px 6px 8px 19px;
}

.comp-head {
    align-items: center;
    background-color: #3c3c3c;
    display: flex;
    gap: 5px;
    height: 21px;
    padding: 0 7px;
}

.comp-head h2 {
    flex: 1;
    font-size: 12px;
    font-weight: 600;
    margin: 0 0 0 2px;
}

.comp-head h2 ~ svg {
    margin-left: 3px;
}

.no-check {
    width: 14px;
}

.prop {
    align-items: center;
    display: flex;
    gap: 6px;
    height: 18px;
}

.prop-name {
    align-items: center;
    display: flex;
    justify-content: space-between;
    margin-right: -6px;
    padding-right: 9px;
    width: 122px;
}

.axis-field {
    display: flex;
    flex: 1;
    min-width: 0;
}

.axis-field .field {
    margin-left: auto;
    flex: none;
    width: 44px;
}

.component.script {
    border-bottom: 1px solid var(--line);
}

.script .props {
    padding-top: 4px;
}

.disabled .prop-name,
.disabled .object-field {
    color: #777;
}

.object-field {
    background-color: var(--field);
    border: 1px solid #222;
    border-radius: 2px;
    flex: 1;
    gap: 2px;
    height: 18px;
    justify-content: flex-start;
    padding: 0 2px;
}

.prop.list-head {
    margin-left: -1px;
}

.list-head .size {
    flex: none;
    margin-left: auto;
    width: 50px;
}

.list {
    background-color: #414141;
    border: 1px solid var(--line);
    border-radius: 3px;
    margin: -2px 1px 0 -3px;
    padding: 2px 2px 0 3px;
}

.element {
    align-items: center;
    display: flex;
    height: 22px;
}

.element span {
    width: 92px;
}

.handle {
    border: 1px solid #5c5c5c;
    border-width: 1px 0;
    height: 4px;
    margin-right: 18px;
    width: 10px;
}

.list.empty {
    padding: 4px 6px;
}

.list-foot {
    align-self: flex-end;
    background-color: #414141;
    border: 1px solid var(--line);
    border-radius: 0 0 3px 3px;
    border-top: 0;
    display: flex;
    height: 22px;
    margin: -2px 15px 0 0;
    padding: 0 4px;
}

.list-foot button {
    color: #eee;
    font-size: 15px;
    font-weight: 700;
    width: 22px;
}

.add-component {
    align-self: center;
    background-color: var(--button);
    color: #e4e4e4;
    height: 22px;
    margin: 10px 0;
    width: 228px;
}

/* ====== STATUS BAR + WATERMARK ====== */

.statusbar {
    display: flex;
    gap: 10px;
    height: 15px;
    justify-content: flex-end;
    overflow: hidden;
    padding: 6px 9px 0 0;
}

.statusbar svg {
    height: 16px;
    width: 16px;
}

.watermark {
    bottom: 89px;
    color: #888886;
    font-family: "Noto Sans", "Noto Sans CJK KR", sans-serif;
    font-size: 16px;
    font-weight: 300;
    line-height: 20px;
    pointer-events: none;
    position: absolute;
    right: 79px;
    width: 336px;
}

.watermark p {
    margin: 0;
    white-space: nowrap;
}

.watermark .big {
    font-size: 21px;
    line-height: 26px;
}

/* ====== TASKBAR ====== */

.taskbar {
    background: linear-gradient(90deg, #cfd8dc, #d4dae0 50%, #dcdfd6);
    color: #111;
    display: flex;
    font-family: "Noto Sans", "Noto Sans CJK KR", sans-serif;
    height: 40px;
}

.start {
    width: 49px;
}

.start svg {
    height: 16px;
    width: 16px;
}

.win-search {
    align-items: center;
    background-color: #fff;
    display: flex;
    font-size: 15px;
    gap: 12px;
    padding: 0 8px 0 11px;
    width: 286px;
}

.win-search input {
    flex: 1;
}

.win-search input::placeholder {
    color: #333;
}

.sparkle {
    height: 26px;
    width: 62px;
}

.apps {
    display: flex;
    gap: 1px;
    padding-left: 2px;
}

.apps button {
    border-bottom: 2px solid transparent;
    border-top: 2px solid transparent;
    width: 48px;
}

.apps svg {
    height: 24px;
    width: 24px;
}

.apps svg.small {
    height: 16px;
    width: 16px;
}

.apps .running {
    background: linear-gradient(#1a78cc, #1a78cc) bottom / 40px 2px no-repeat;
    background-origin: border-box;
}

.apps .current {
    background-color: #f7f9f9;
    background-size: 48px 2px;
}

.tray {
    align-items: center;
    display: flex;
    margin-left: auto;
    padding-right: 16px;
}

.weather {
    font-size: 14px;
    gap: 5px;
    margin-right: 23px;
}

.weather svg {
    height: 24px;
    width: 26px;
}

.weather text {
    fill: #fff;
    font-size: 10px;
}

.sky {
    margin-left: 8px;
}

.tray-icons {
    display: flex;
    gap: 8px;
}

.tray-icons svg {
    fill: none;
    height: 16px;
    stroke: #111;
    stroke-width: 1.2;
    width: 16px;
}

.clock {
    flex-direction: column;
    line-height: 18px;
    margin: 0 20px 0 10px;
}

.notify svg {
    height: 26px;
    width: 26px;
}

.notify text {
    font-size: 11px;
}
```
